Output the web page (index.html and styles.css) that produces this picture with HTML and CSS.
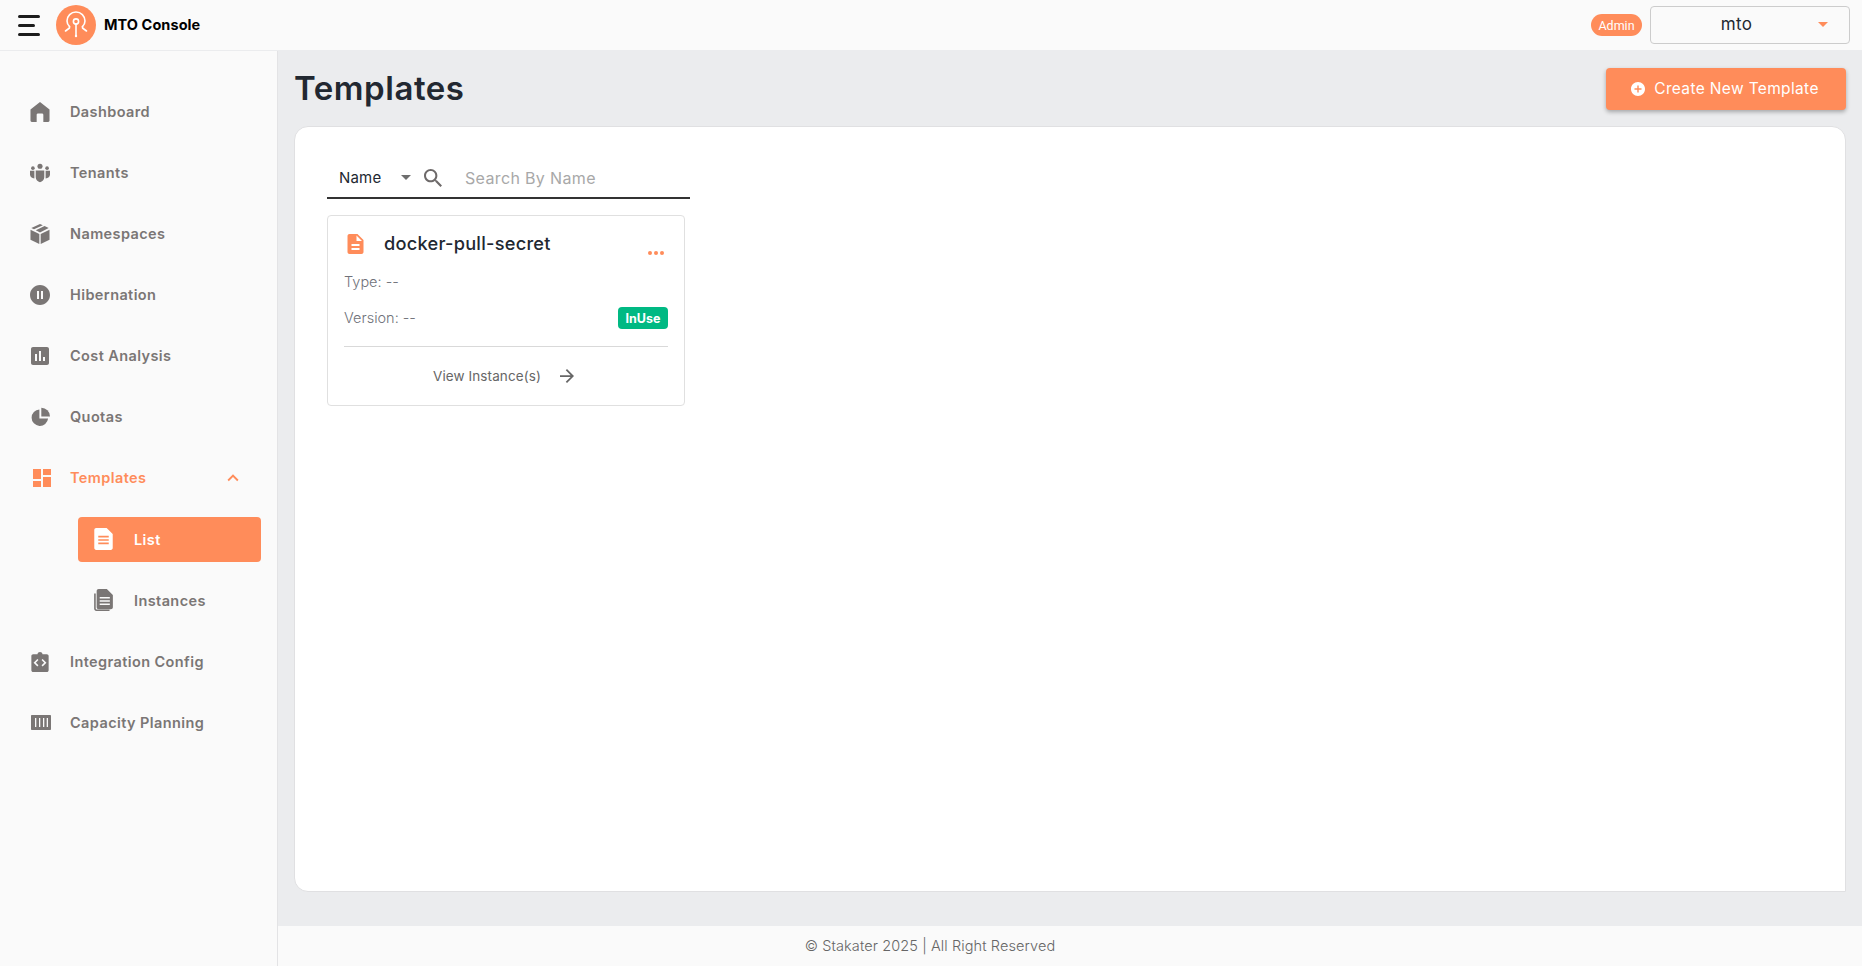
FILE: index.html
```html
<!DOCTYPE html>
<html lang="en">
<head>
<meta charset="utf-8">
<title>MTO Console</title>
<link rel="stylesheet" href="styles.css">
</head>
<body>
<header class="topbar">
  <div class="burger"><span class="b1"></span><span class="b2"></span><span class="b3"></span></div>
  <div class="logo">
    <svg viewBox="0 0 40 40" width="40" height="40"><circle cx="20" cy="20" r="20" fill="#ff8c5a"/><g fill="none" stroke="#fff" stroke-width="1.6" stroke-linecap="round" stroke-linejoin="round"><path d="M13.5 21.5c-2-2-2.5-4-2.5-5.5a9 9 0 0 1 18 0c0 1.500-.5 3.500-2.500 5.500"/><path d="M13.500 21.500v1.500l-4 3"/><path d="M26.500 21.500v1.500l4 3"/><circle cx="20" cy="16.500" r="2.600"/><path d="M20 19v11"/></g><circle cx="20" cy="31" r="1.200" fill="#fff"/></svg>
  </div>
  <div class="brand">MTO Console</div>
  <div class="spacer"></div>
  <span class="role">Admin</span>
  <div class="tenant"><span class="tenant-name">mto</span><svg class="tenant-caret" viewBox="0 0 10 5" width="10" height="5"><path d="M0 0l5 5 5-5z"/></svg></div>
</header>
<div class="shell">
  <aside class="sidebar">
    <nav class="nav">
      <a class="nav-item"><svg class="ico" viewBox="2 1.500 20 21"><path d="M12 1.500 2 9.500V21c0 .8.6 1.400 1.400 1.400h5.100v-7.400c0-.8.600-1.400 1.400-1.400h4.200c.8 0 1.400.6 1.400 1.400v7.400h5.100c.8 0 1.400-.6 1.400-1.400V9.500z"/></svg><span>Dashboard</span></a>
      <a class="nav-item"><svg class="ico" viewBox="1 2.200 22 20.300"><circle cx="12" cy="5" r="2.800"/><circle cx="4.200" cy="7" r="2"/><circle cx="19.800" cy="7" r="2"/><path d="M7.300 9.500h9.400v7.500c0 3-2.200 4.800-4.700 5.500-2.500-.7-4.700-2.500-4.700-5.500z"/><path d="M1 10h4.800v8.300C3 18.300 1 16.500 1 14z"/><path d="M23 10h-4.800v8.300c2.800 0 4.800-1.800 4.800-4.300z"/></svg><span>Tenants</span></a>
      <a class="nav-item"><svg class="ico" viewBox="2 1.500 20 21"><path d="M2 7.500 11.300 12v10.500L2 18z"/><path d="M22 7.500 12.700 12v10.500L22 18z"/><path d="M12 1.500l3 1.300-9.300 4.300-2.800-1.300z"/><path d="M16.800 3.600l4.300 2.200L12 10.400 7.600 8z"/></svg><span>Namespaces</span></a>
      <a class="nav-item"><svg class="ico" viewBox="2 2 20 20"><path d="M12 2C6.480 2 2 6.480 2 12s4.480 10 10 10 10-4.480 10-10S17.520 2 12 2zm-1 14H9V8h2v8zm4 0h-2V8h2v8z"/></svg><span>Hibernation</span></a>
      <a class="nav-item"><svg class="ico" viewBox="2 2 20 20"><path d="M19 3H5c-1.100 0-2 .9-2 2v14c0 1.100.9 2 2 2h14c1.100 0 2-.9 2-2V5c0-1.100-.9-2-2-2zM9 17H7v-7h2v7zm4 0h-2V7h2v10zm4 0h-2v-4h2v4z"/></svg><span>Cost Analysis</span></a>
      <a class="nav-item"><svg class="ico" viewBox="0 1.500 23 21.500"><path d="M10.800 3.500a9.500 9.500 0 1 0 10 10.500h-10z"/><path d="M13 1.500V11.600h10A10.200 10.200 0 0 0 13 1.500z"/></svg><span>Quotas</span></a>
      <a class="nav-item active"><svg class="ico" viewBox="3 3 18 18"><path d="M3 13h8V3H3v10zm0 8h8v-6H3v6zm10 0h8V11h-8v10zm0-18v6h8V3h-8z"/></svg><span>Templates</span><svg class="chev" viewBox="0 0 24 24"><path d="M12 8l-6 6 1.410 1.410L12 10.830l4.590 4.580L18 14z"/></svg></a>
      <div class="subnav">
        <a class="sub-item current"><svg class="ico" viewBox="3.200 1.500 17.600 21"><path d="M15 1.500H5c-1 0-1.800.8-1.800 1.800v17.400c0 1 .8 1.800 1.800 1.800h14c1 0 1.800-.8 1.800-1.800V7.200zM7 9h10v1.500H7zm0 3.200h10v1.500H7zm0 3.200h10v1.500H7z"/></svg><span>List</span></a>
        <a class="sub-item"><svg class="ico" viewBox="3 1 18.500 21.700"><path d="M3 5.500v15c0 1.200 1 2.200 2.200 2.200h13v-1.500H5.500c-.5 0-.9-.4-.9-.9V5.500z"/><path d="M15.500 1H7.500C6.400 1 5.500 1.900 5.500 3v16c0 1.100.9 2 2 2h12c1.100 0 2-.9 2-2V7zM8.500 9h10v1.400h-10zm0 3.200h10v1.400h-10zm0 3.200h10v1.400h-10z"/></svg><span>Instances</span></a>
      </div>
      <a class="nav-item"><svg class="ico" viewBox="1 1 22 22"><path d="M19.500 3.500h-4.700C14.500 2 13.400 1 12 1S9.500 2 9.200 3.500H4.500c-1.100 0-2 .9-2 2v15.500c0 1.100.9 2 2 2h15c1.100 0 2-.9 2-2V5.500c0-1.100-.9-2-2-2zM10.300 15.700 9.100 16.900 4.900 12.800l4.200-4.100 1.200 1.200-2.900 2.900zm4.600 1.200-1.200-1.200 2.900-2.900-2.900-2.900 1.200-1.200 4.200 4.100z"/></svg><span>Integration Config</span></a>
      <a class="nav-item"><svg class="ico wide" viewBox="0 0 20 15"><path d="M1 0h18c.6 0 1 .4 1 1v13c0 .6-.4 1-1 1H1c-.6 0-1-.4-1-1V1c0-.6.4-1 1-1zm3 3v9h1.300V3zm4 0v9h1.300V3zm4 0v9h1.300V3zm3.700 0v9H17V3z" fill-rule="evenodd"/></svg><span>Capacity Planning</span></a>
    </nav>
  </aside>
  <div class="content">
    <main class="main">
      <div class="page-head">
        <h1>Templates</h1>
        <button class="create"><svg viewBox="2 2 20 20" width="14" height="14"><path d="M12 2C6.480 2 2 6.480 2 12s4.480 10 10 10 10-4.480 10-10S17.520 2 12 2zm5 11h-4v4h-2v-4H7v-2h4V7h2v4h4v2z"/></svg><span>Create New Template</span></button>
      </div>
      <section class="panel">
        <div class="filter">
          <span class="filter-by">Name</span>
          <svg class="filter-caret" viewBox="0 0 10 5" width="10" height="5"><path d="M0 0l5 5 5-5z"/></svg>
          <svg class="search-ico" viewBox="3 3 17.500 17.500" width="18" height="18"><path d="M15.500 14h-.79l-.28-.27C15.410 12.590 16 11.110 16 9.500 16 5.910 13.090 3 9.500 3S3 5.910 3 9.500 5.910 16 9.500 16c1.610 0 3.090-.59 4.230-1.570l.27.28v.79l5 4.990L20.490 19l-4.990-5zm-6 0C7.010 14 5 11.990 5 9.500S7.010 5 9.500 5 14 7.010 14 9.500 11.990 14 9.500 14z"/></svg>
          <span class="placeholder">Search By Name</span>
        </div>
        <article class="card">
          <div class="card-title">
            <svg class="doc" viewBox="4 2 16 20" width="17" height="20"><path d="M14 2H6c-1.100 0-1.990.9-1.990 2L4 20c0 1.100.89 2 1.990 2H18c1.100 0 2-.9 2-2V8l-6-6zm2 16H8v-2h8v2zm0-4H8v-2h8v2zm-3-5V3.500L18.500 9H13z"/></svg>
            <h2>docker-pull-secret</h2>
            <span class="dots"><i></i><i></i><i></i></span>
          </div>
          <div class="meta">Type: --</div>
          <div class="meta-row"><span class="meta">Version: --</span><span class="status">InUse</span></div>
          <div class="card-foot"><span>View Instance(s)</span><svg viewBox="4 4 16 16" width="14" height="14"><path d="M12 4l-1.410 1.410L16.170 11H4v2h12.170l-5.580 5.590L12 20l8-8z"/></svg></div>
        </article>
      </section>
    </main>
    <footer class="footer">© Stakater 2025 | All Right Reserved</footer>
  </div>
</div>
</body>
</html>
```
FILE: styles.css
```css
* { box-sizing: border-box; }
html, body { margin: 0; height: 100%; }
body {
  display: flex;
  flex-direction: column;
  height: 966px;
  overflow: hidden;
  font-family: Inter, "Open Sans", "Liberation Sans", sans-serif;
  background: #fafafa;
  color: #222831;
}
.topbar {
  display: flex;
  align-items: center;
  height: 51px;
  flex: none;
  padding: 0 12px 0 18px;
  background: #fafafa;
  border-bottom: 1px solid #ebecee;
}
.burger { display: flex; flex-direction: column; gap: 6px; width: 22px; margin-right: 16px; }
.burger span { display: block; height: 3px; background: #1c1c1c; border-radius: 2px; }
.burger .b2 { width: 17px; }
.logo { width: 40px; height: 40px; margin-right: 8px; }
.logo svg { display: block; }
.brand { font-size: 14.5px; font-weight: 700; color: #000; letter-spacing: .07px; margin-bottom: 2px; }
.spacer { flex: 1; }
.role {
  display: flex; align-items: center; justify-content: center;
  width: 51px; height: 22px; margin-right: 8px;
  border-radius: 11px;
  background: #ff8c5a; color: #fff;
  font: 400 12.500px Roboto, sans-serif;
}
.tenant {
  display: flex; align-items: center;
  width: 200px; height: 38px;
  margin-bottom: 1px;
  border: 1px solid #ccc; border-radius: 4px;
  padding: 0 21px 0 0;
}
.tenant-name { flex: 1; text-align: center; font-size: 17px; color: #222831; padding: 0 0 2px 4px; letter-spacing: .3px; }
.tenant-caret { fill: #ff8c5a; }
.shell { display: flex; flex: 1; min-height: 0; }
.sidebar {
  width: 278px; flex: none;
  background: #fafafa;
  border-right: 1px solid #e3e3e5;
  padding-top: 30px;
}
.nav { display: flex; flex-direction: column; }
.nav-item, .sub-item {
  display: flex; align-items: center;
  height: 61px;
  padding-left: 30px;
  font-size: 14.5px; font-weight: 600;
  color: #7a7675;
  letter-spacing: .4px;
}
.nav-item .ico { width: 20px; height: 20px; margin-right: 20px; fill: #7a7675; flex: none; }
.nav-item .ico.wide { width: 20px; height: 15px; margin-left: 1px; margin-right: 19px; }
.nav-item.active { color: #ff8c5a; }
.nav-item.active .ico { width: 18px; height: 18px; margin-left: 3px; margin-right: 19px; fill: #ff8c5a; }
.chev { width: 22px; height: 22px; fill: #ff8c5a; margin-left: 76px; }
.subnav { display: flex; flex-direction: column; }
.sub-item { margin: 0 16px 0 78px; height: 61px; padding: 0 0 1px 16px; }
.sub-item .ico { width: 19px; height: 22px; margin-right: 21px; fill: #7a7675; flex: none; }
.sub-item.current { height: 45px; margin-top: 9px; margin-bottom: 8px; background: #ff8c5a; color: #fff; border-radius: 4px; }
.sub-item.current .ico { fill: #fff; }
.content { flex: 1; display: flex; flex-direction: column; min-width: 0; }
.main {
  flex: 1; min-height: 0;
  display: flex; flex-direction: column;
  background: #ebecee;
  padding: 17px 16px 34px;
}
.page-head { display: flex; align-items: center; justify-content: space-between; height: 42px; margin-bottom: 16px; }
h1 { margin: 0 0 2px; font-size: 33px; font-weight: 600; color: #222831; letter-spacing: .55px; }
.create {
  display: flex; align-items: center; justify-content: center; gap: 9px;
  width: 240px; height: 42px;
  border: 0; border-radius: 4px;
  background: #ff8c5a; color: #fff;
  padding: 0 2px 1px 0;
  font: 400 15.500px Inter, sans-serif;
  letter-spacing: .35px;
  box-shadow: 0 2px 4px rgba(0,0,0,.3);
}
.create svg { fill: #fff; }
.panel {
  flex: 1;
  background: #fff;
  border: 1px solid #e0e0e2;
  border-radius: 14px 14px 0 14px;
  padding: 31px 32px;
}
.filter {
  display: flex; align-items: center;
  width: 363px; height: 41px;
  border-bottom: 2px solid #333;
  padding-left: 12px;
}
.filter-by { width: 62px; font-size: 15px; font-weight: 400; color: #222831; letter-spacing: .2px; }
.filter-caret { fill: #6e6e6e; margin-right: 13px; }
.search-ico { fill: #6e6a6a; margin-right: 23px; }
.placeholder { font-size: 16px; font-weight: 400; color: #a8a8a8; letter-spacing: .35px; }
.card {
  width: 358px; height: 191px;
  margin-top: 16px;
  border: 1px solid #e0e0e0;
  border-radius: 4px;
  padding: 15px 16px 0 16px;
  display: flex; flex-direction: column;
}
.card-title { display: flex; align-items: center; height: 24px; }
.doc { fill: #ff8c5a; margin: 2px 20px 0 3px; flex: none; }
h2 { margin: 0; font-size: 18.200px; font-weight: 500; color: #222831; letter-spacing: .25px; flex: 1; }
.dots { display: flex; gap: 2px; margin: 20px 0 0; padding-right: 4px; }
.dots i { width: 4px; height: 4px; border-radius: 50%; background: #ff8c5a; }
.meta { font-size: 14.500px; font-weight: 300; color: #70727a; }
.card-title + .meta { margin-top: 18px; height: 22px; }
.meta-row { display: flex; align-items: center; justify-content: space-between; margin-top: 11px; height: 22px; }
.status {
  display: flex; align-items: center; justify-content: center;
  width: 50px; height: 22px; margin-top: 2px;
  border-radius: 4px;
  background: #00b983; color: #fff;
  font-size: 12.500px; font-weight: 700;
}
.card-foot {
  display: flex; align-items: center; justify-content: center; gap: 19px;
  margin-top: 18px; padding: 21px 5px 0 0;
  border-top: 1px solid #d9d9d9;
  font-size: 13.500px; color: #666; letter-spacing: .1px;
}
.card-foot svg { fill: #666; }
.footer {
  flex: none; height: 40px;
  display: flex; align-items: center; justify-content: center;
  padding: 0 280px 2px 0;
  background: #fafafa;
  font-size: 14.500px; font-weight: 300; color: #666; letter-spacing: .1px;
}
```
